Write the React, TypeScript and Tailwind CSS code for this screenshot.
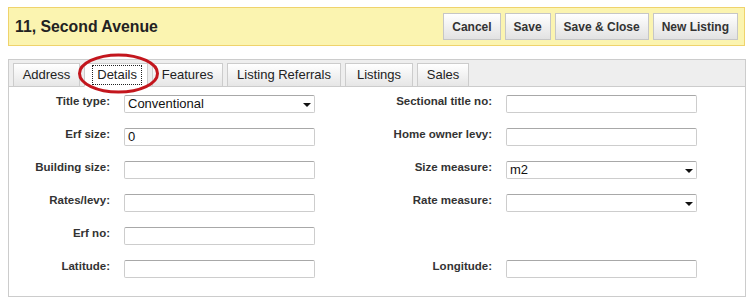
import { ReactNode } from "react";

const TABS = [
  { label: "Address", width: "w-[67px]" },
  { label: "Details", width: "w-[64px]" },
  { label: "Features", width: "w-[71px]" },
  { label: "Listing Referrals", width: "w-[114px]" },
  { label: "Listings", width: "w-[68px]" },
  { label: "Sales", width: "w-[52px]" },
] as const;

type Field = { label: string; kind: "input" | "select"; value?: string };

const ROWS: { left?: Field; right?: Field }[] = [
  { left: { label: "Title type:", kind: "select", value: "Conventional" }, right: { label: "Sectional title no:", kind: "input" } },
  { left: { label: "Erf size:", kind: "input", value: "0" }, right: { label: "Home owner levy:", kind: "input" } },
  { left: { label: "Building size:", kind: "input" }, right: { label: "Size measure:", kind: "select", value: "m2" } },
  { left: { label: "Rates/levy:", kind: "input" }, right: { label: "Rate measure:", kind: "select" } },
  { left: { label: "Erf no:", kind: "input" } },
  { left: { label: "Latitude:", kind: "input" }, right: { label: "Longitude:", kind: "input" } },
];

function Button({ children }: { children: ReactNode }) {
  return (
    <button className="h-[27px] px-[8px] border border-[#c6c6c6] bg-gradient-to-b from-white to-[#e2e2e2] text-[12px] font-bold text-[#333]">
      {children}
    </button>
  );
}

function Control({ field }: { field: Field }) {
  return (
    <div className="relative flex h-[18px] w-[191px] items-center rounded-[2px] border border-[#cdcdcd] border-t-[#a8a8a8] bg-white px-[3px] text-[13px] text-[#111]">
      <span>{field.value ?? ""}</span>
      {field.kind === "select" && (
        <span className="absolute right-[3px] top-[7px] h-0 w-0 border-x-[4px] border-t-[4px] border-x-transparent border-t-[#111]" />
      )}
    </div>
  );
}

function Cell({ field, labelWidth }: { field?: Field; labelWidth: string }) {
  return (
    <div className="flex items-start">
      <div className={`${labelWidth} text-right text-[11.5px] font-bold leading-3 text-[#333]`}>{field?.label}</div>
      <div className="ml-[14px]">{field && <Control field={field} />}</div>
    </div>
  );
}

export default function App() {
  return (
    <div className="h-[303px] w-[753px] bg-white px-[8px] pt-[7px] font-['Liberation_Sans',Arial,sans-serif]">
      <header className="flex h-[39px] items-center justify-between border border-[#efd36c] bg-[#fbf4b0] pl-[6px] pr-[6px]">
        <h1 className="text-[15.8px] font-bold text-[#222]">11, Second Avenue</h1>
        <div className="flex gap-[4px]">
          <Button>Cancel</Button>
          <Button>Save</Button>
          <Button>Save &amp; Close</Button>
          <Button>New Listing</Button>
        </div>
      </header>

      <section className="relative mt-[13px] h-[238px] w-[738px] border border-[#cccccc]">
        <nav className="flex h-[27px] gap-[4px] border-b border-[#cccccc] bg-[#eeeeee] pl-[4px] pt-[3px]">
          {TABS.map(({ label, width }) => {
            const active = label === "Details";
            return (
              <div
                key={label}
                className={`-mb-px flex h-[24px] ${width} items-center border border-[#cccccc] text-[13px] text-[#222] ${
                  active ? "justify-end border-b-white bg-white pr-[5px]" : "justify-center bg-gradient-to-b from-white to-[#e6e6e6]"
                }`}
              >
                <span className={active ? "flex h-[20px] items-center border border-dotted border-[#222] px-[4px]" : ""}>
                  {label}
                </span>
              </div>
            );
          })}
        </nav>

        <div className="flex flex-col gap-[15px] pt-[8px]">
          {ROWS.map((row, i) => (
            <div key={i} className="flex">
              <Cell field={row.left} labelWidth="w-[101px]" />
              <Cell field={row.right} labelWidth="w-[177px]" />
            </div>
          ))}
        </div>

        <svg className="absolute left-[69px] top-[-7px]" width="84" height="42" viewBox="0 0 84 42">
          <ellipse cx="40.5" cy="20.5" rx="39" ry="18.5" fill="none" stroke="#c3161d" strokeWidth="3" />
        </svg>
      </section>
    </div>
  );
}
